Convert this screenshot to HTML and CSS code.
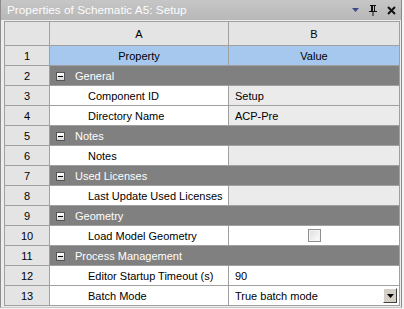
FILE: index.html
```html
<!DOCTYPE html>
<html>
<head>
<meta charset="utf-8">
<link rel="stylesheet" href="styles.css">
</head>
<body>
<div class="window">
  <div class="titlebar">
    <span class="title">Properties of Schematic A5: Setup</span>
    <div class="tools">
      <svg class="tri" width="7" height="4" viewBox="0 0 7 4"><path d="M0 0H7L3.5 4Z" fill="#3c4a8c"/></svg>
      <svg class="pin" width="10" height="11" viewBox="0 0 10 11"><path d="M2 0H8V1H7V6H9V7H5.5V11H4.5V7H1V6H3V1H2Z M5 1V6H6V1Z" fill="#111" fill-rule="evenodd"/></svg>
      <svg class="close" width="9" height="9" viewBox="0 0 9 9"><path d="M1 1L8 8M8 1L1 8" stroke="#111" stroke-width="2"/></svg>
    </div>
  </div>
  <div class="body">
    <table class="grid">
      <colgroup><col class="c0"><col class="c1"><col class="c2"></colgroup>
      <tr class="colhead"><td></td><td>A</td><td>B</td></tr>
      <tr class="hdr"><td class="num">1</td><td class="center">Property</td><td class="center">Value</td></tr>
      <tr class="group"><td class="num">2</td><td colspan="2"><span class="minus"></span>General</td></tr>
      <tr><td class="num">3</td><td class="prop">Component ID</td><td class="val ro">Setup</td></tr>
      <tr><td class="num">4</td><td class="prop">Directory Name</td><td class="val ro">ACP-Pre</td></tr>
      <tr class="group"><td class="num">5</td><td colspan="2"><span class="minus"></span>Notes</td></tr>
      <tr><td class="num">6</td><td class="prop">Notes</td><td class="val ro"></td></tr>
      <tr class="group"><td class="num">7</td><td colspan="2"><span class="minus"></span>Used Licenses</td></tr>
      <tr><td class="num">8</td><td class="prop">Last Update Used Licenses</td><td class="val ro"></td></tr>
      <tr class="group"><td class="num">9</td><td colspan="2"><span class="minus"></span>Geometry</td></tr>
      <tr><td class="num">10</td><td class="prop">Load Model Geometry</td><td class="val center"><span class="check"></span></td></tr>
      <tr class="group"><td class="num">11</td><td colspan="2"><span class="minus"></span>Process Management</td></tr>
      <tr><td class="num">12</td><td class="prop">Editor Startup Timeout (s)</td><td class="val">90</td></tr>
      <tr><td class="num">13</td><td class="prop">Batch Mode</td><td class="val"><div class="combo"><span>True batch mode</span><span class="drop"><svg width="7" height="4" viewBox="0 0 7 4"><path d="M0 0H7L3.5 4Z" fill="#000"/></svg></span></div></td></tr>
    </table>
  </div>
</div>
</body>
</html>
```
FILE: styles.css
```css
html, body {
  margin: 0;
  padding: 0;
  background: #f4f4f4;
}
body {
  font-family: "Liberation Sans", Arial, sans-serif;
  font-size: 11px;
  color: #000;
}
.window {
  width: 402px;
  height: 308px;
  box-sizing: border-box;
  border-left: 1px solid #8c8c8c;
  border-right: 1px solid #8c8c8c;
  border-bottom: 1px solid #c8c8c8;
  background: #ececec;
  display: flex;
  flex-direction: column;
}
.titlebar {
  height: 20px;
  flex: none;
  background: linear-gradient(#c6c6c6, #b8b8b8);
  display: flex;
  align-items: center;
  padding: 0 5px 0 6px;
  box-sizing: border-box;
}
.title {
  color: #fcfcfc;
  flex: 1;
  font-size: 11.8px;
}
.tools {
  display: flex;
  align-items: center;
  gap: 9px;
}
.body {
  padding: 1px 0 0 3px;
}
.grid {
  border-collapse: collapse;
  table-layout: fixed;
  width: 396px;
}
.c0 { width: 45px; }
.c1 { width: 179px; }
.c2 { width: 171px; }
.grid td {
  border: 1px solid #a0a0a0;
  height: 20px;
  padding: 0;
  box-sizing: border-box;
  white-space: nowrap;
  overflow: hidden;
}
.colhead td {
  height: 24px;
  background: #e4e4e4;
  text-align: center;
}
.num {
  background: #e4e4e4;
  text-align: center;
}
.hdr td.center {
  background: #a6c8ef;
}
.center { text-align: center; }
.group td[colspan] {
  background: #808080;
  color: #fff;
  padding-left: 6px;
}
.minus {
  display: inline-block;
  width: 9px;
  height: 9px;
  box-sizing: border-box;
  border: 1px solid #555;
  background: linear-gradient(#fff, #d8d8d8);
  margin-right: 10px;
  vertical-align: -1px;
  position: relative;
}
.minus::after {
  content: "";
  position: absolute;
  left: 1px;
  right: 1px;
  top: 3px;
  height: 1px;
  background: #000;
}
.prop {
  background: #fff;
  padding-left: 38px !important;
}
.val {
  background: #fff;
  padding-left: 6px !important;
}
.val.ro { background: #ebebeb; }
.val.center { padding-left: 0 !important; }
.check {
  display: inline-block;
  width: 13px;
  height: 13px;
  box-sizing: border-box;
  border: 1px solid #8e8f8f;
  background: linear-gradient(135deg, #dcdcdc, #fff);
  box-shadow: inset 0 0 0 1px #f4f4f4;
  vertical-align: middle;
}
.combo {
  display: flex;
  align-items: center;
  justify-content: space-between;
  padding-right: 2px;
}
.drop {
  width: 14px;
  height: 15px;
  box-sizing: border-box;
  background: #d4d0c8;
  border: 1px solid;
  border-color: #fff #404040 #404040 #fff;
  display: flex;
  align-items: center;
  justify-content: center;
}
```
